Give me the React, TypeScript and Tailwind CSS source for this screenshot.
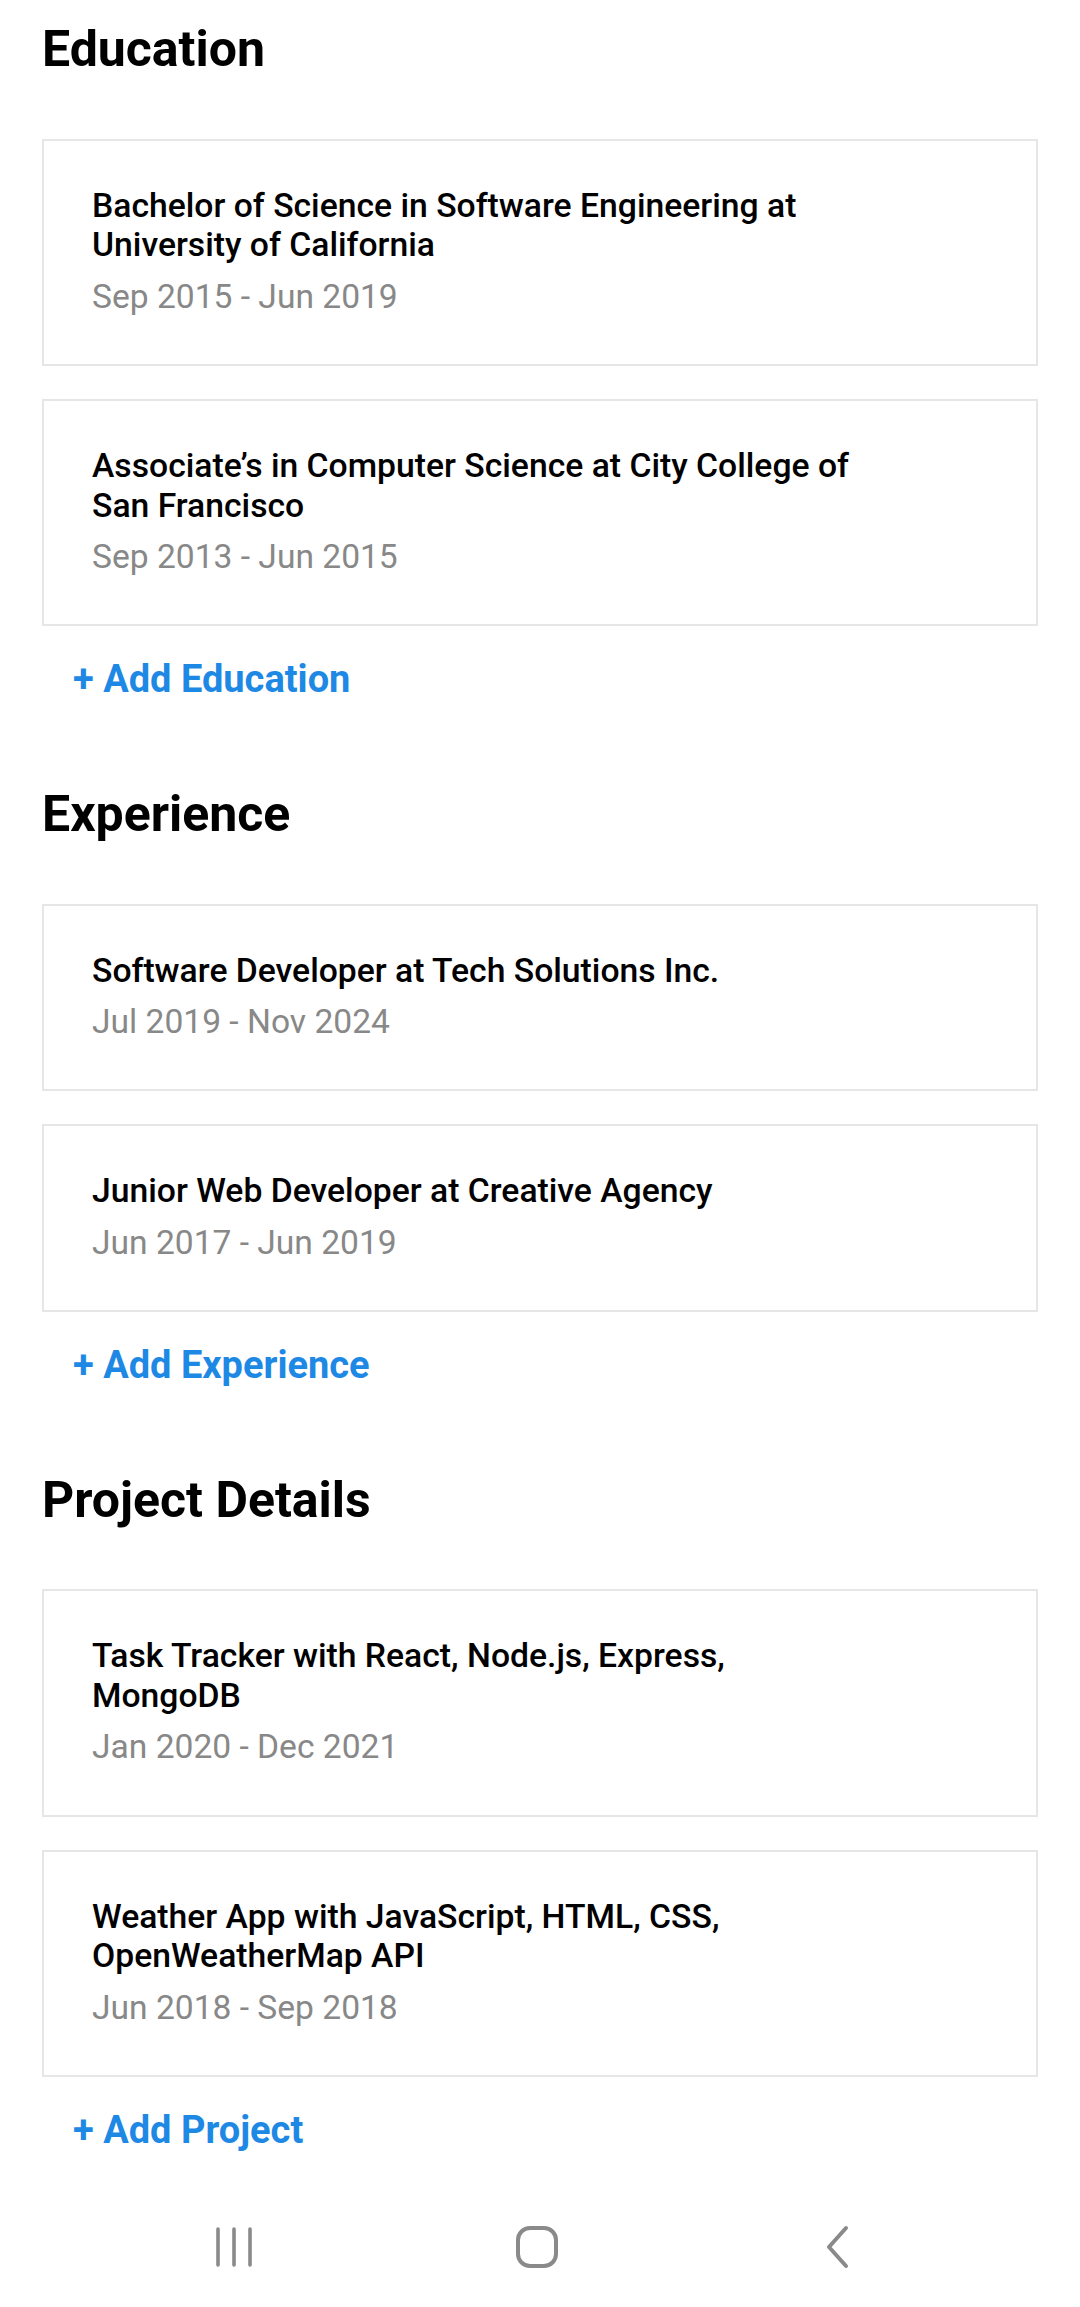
import React from 'react'

type Item = { title: string; dates: string }

const sections: { heading: string; add: string; items: Item[] }[] = [
  {
    heading: 'Education',
    add: '+ Add Education',
    items: [
      { title: 'Bachelor of Science in Software Engineering at University of California', dates: 'Sep 2015 - Jun 2019' },
      { title: 'Associate\u2019s in Computer Science at City College of San Francisco', dates: 'Sep 2013 - Jun 2015' },
    ],
  },
  {
    heading: 'Experience',
    add: '+ Add Experience',
    items: [
      { title: 'Software Developer at Tech Solutions Inc.', dates: 'Jul 2019 - Nov 2024' },
      { title: 'Junior Web Developer at Creative Agency', dates: 'Jun 2017 - Jun 2019' },
    ],
  },
  {
    heading: 'Project Details',
    add: '+ Add Project',
    items: [
      { title: 'Task Tracker with React, Node.js, Express, MongoDB', dates: 'Jan 2020 - Dec 2021' },
      { title: 'Weather App with JavaScript, HTML, CSS, OpenWeatherMap API', dates: 'Jun 2018 - Sep 2018' },
    ],
  },
]

function Card({ item }: { item: Item }) {
  return (
    <div className="border-2 border-[#e6e6e6] bg-white px-[48px] pt-[45px] pb-[48px]">
      <p className="max-w-[770px] text-[33.7px] leading-[39.5px] font-medium text-black">{item.title}</p>
      <p className="mt-[12px] text-[33.6px] leading-[39.4px] text-[#888888]">{item.dates}</p>
    </div>
  )
}

function NavBar() {
  return (
    <div className="h-[120px] flex items-center justify-center gap-[183px] pr-[6px]">
      <div className="w-[120px] flex justify-center">
        <svg width="40" height="42" viewBox="0 0 40 42" fill="none" stroke="#8a8a8a" strokeWidth="3.6" strokeLinecap="round">
          <line x1="4" y1="3" x2="4" y2="39" />
          <line x1="20" y1="3" x2="20" y2="39" />
          <line x1="36" y1="3" x2="36" y2="39" />
        </svg>
      </div>
      <div className="w-[120px] flex justify-center">
        <svg width="44" height="44" viewBox="0 0 44 44" fill="none" stroke="#8a8a8a" strokeWidth="4">
          <rect x="3" y="3" width="38" height="38" rx="12" />
        </svg>
      </div>
      <div className="w-[120px] flex justify-center">
        <svg className="mr-[6px]" width="26" height="44" viewBox="0 0 26 44" fill="none" stroke="#8a8a8a" strokeWidth="4" strokeLinecap="round" strokeLinejoin="round">
          <polyline points="22,3 5,22 22,41" />
        </svg>
      </div>
    </div>
  )
}

export default function App() {
  return (
    <div className="w-[1080px] h-[2307px] bg-white flex flex-col" style={{ fontFamily: 'Roboto, "Noto Sans", sans-serif' }}>
      <div className="flex-1 px-[42px] pt-[20px]">
        {sections.map((s, i) => (
          <section key={s.heading} className={i > 0 ? 'mt-[83px]' : ''}>
            <h2 className="text-[50px] leading-[58.6px] font-bold text-black">{s.heading}</h2>
            <div className="mt-[60px] flex flex-col gap-[33px]">
              {s.items.map((it) => (
                <Card key={it.title} item={it} />
              ))}
            </div>
            <button className="mt-[31px] ml-[31px] text-[38px] leading-[44.5px] font-bold text-[#1e88e5]">{s.add}</button>
          </section>
        ))}
      </div>
      <NavBar />
    </div>
  )
}
